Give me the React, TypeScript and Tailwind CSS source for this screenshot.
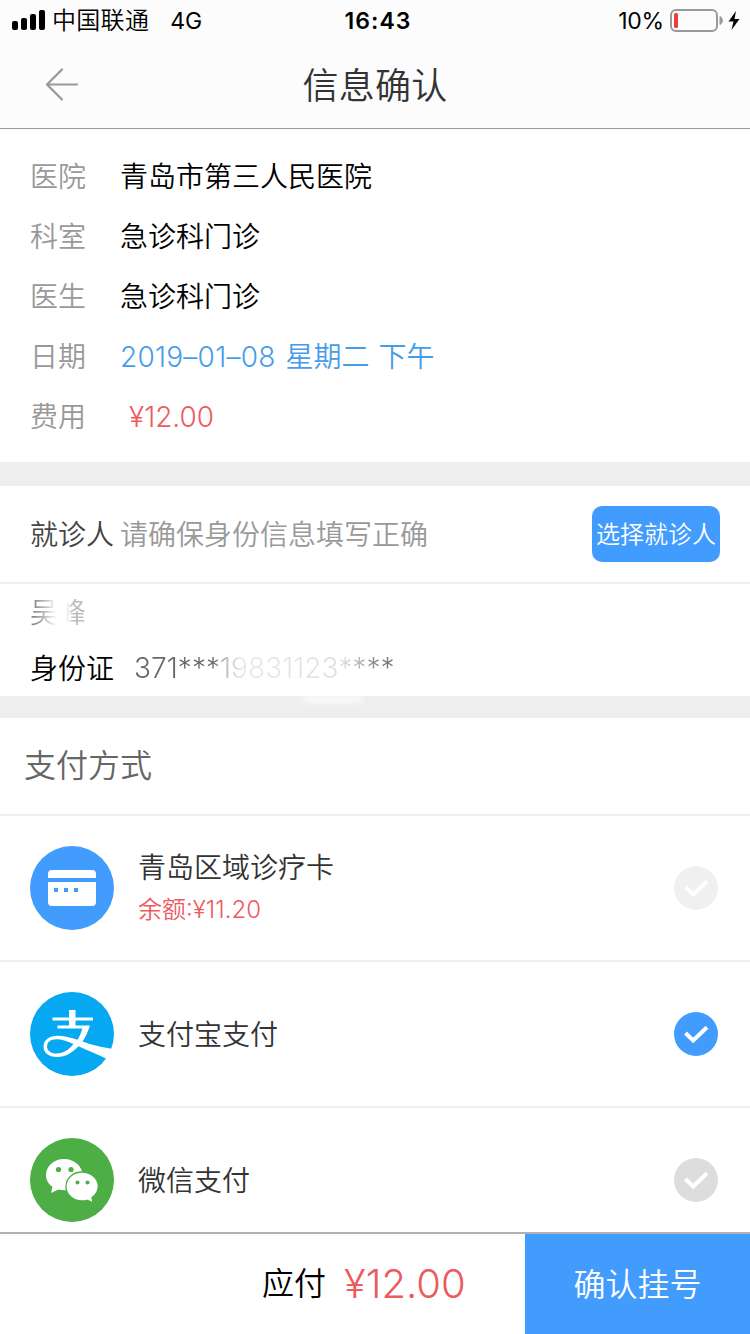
import type { ReactNode } from 'react';

function Row({ label, children }: { label: string; children: ReactNode }) {
  return (
    <div className="flex h-[60px] items-center">
      <span className="w-[90px] text-[#999999]">{label}</span>
      <span className="whitespace-pre">{children}</span>
    </div>
  );
}

function Check({ color }: { color: string }) {
  return (
    <svg className="mr-8 size-11" viewBox="0 0 44 44" aria-hidden="true">
      <circle cx="22" cy="22" r="22" fill={color} />
      <path d="M11.500 21L19.200 28.500L33 15.300" fill="none" stroke="#fff" strokeWidth="4" />
    </svg>
  );
}

function CardIcon() {
  return (
    <svg className="size-[84px]" viewBox="0 0 84 84" aria-hidden="true">
      <circle cx="42" cy="42" r="42" fill="#419cfd" />
      <path d="M18 32v-4a4 4 0 0 1 4-4h40a4 4 0 0 1 4 4v4z" fill="#fff" />
      <path d="M18 36h48v20a4 4 0 0 1-4 4H22a4 4 0 0 1-4-4z" fill="#fff" />
      <path d="M24 42h4v4h-4zM34 42h4v4h-4zM44 42h4v4h-4z" fill="#419cfd" />
    </svg>
  );
}

function AlipayIcon() {
  return (
    <svg className="size-[84px]" viewBox="0 0 84 84" aria-hidden="true">
      <circle cx="42" cy="42" r="42" fill="#06a8f2" />
      <path d="M39 18h6.500v7.500H63v3H45.500v5H60C58 40 55.500 45 52.500 49.500C60 52.500 72 55.500 83 57C81.500 60.500 79.500 64 77 67C67 62.500 57 58 48.500 54.300C42.500 60.500 36 65 27 65C18.500 65 13.500 60.500 13.500 54.500C13.500 48 19.500 43.800 27 43.800C34 43.800 41 45.500 47.500 47.800C49.800 44.300 51.300 40.500 52.300 36.500H27.500v-3H39v-5H22.500v-3H39z" fill="#fff" />
      <path d="M43.500 52C36.500 48.800 31.500 47.200 26.500 47.200C20.800 47.200 17 50 17 54.500C17 58.800 21 61.500 26.500 61.500C33.500 61.500 39 57.500 43.500 52z" fill="#06a8f2" />
    </svg>
  );
}

function WechatIcon() {
  return (
    <svg className="size-[84px]" viewBox="0 0 84 84" aria-hidden="true">
      <circle cx="42" cy="42" r="42" fill="#4dae46" />
      <path d="M34 21C24 21 16 28 16 37C16 42 18.500 46 22.500 48.800L21 55L28.500 51.500C30.300 52 32 52.200 34 52.200C44 52.200 52.500 45.500 52.500 37C52.500 28 44 21 34 21z" fill="#fff" />
      <path d="M52 34C43 34 36 40.400 36 48.500C36 56.700 43 63 52 63C53.800 63 55.500 62.700 57 62.300L63.200 64.800L62 59.500C66 56.700 68.300 53 68.300 48.500C68.300 40.400 61 34 52 34z" fill="#fff" stroke="#4dae46" strokeWidth="1.300" />
      <g fill="#4dae46">
        <circle cx="28.500" cy="31.500" r="2.600" />
        <circle cx="41" cy="31.500" r="2.600" />
        <circle cx="47.500" cy="44.500" r="2" />
        <circle cx="57.500" cy="44.500" r="2" />
      </g>
    </svg>
  );
}

function PayRow({ icon, check, children }: { icon: ReactNode; check: string; children: ReactNode }) {
  return (
    <div className="flex h-[146px] shrink-0 items-center border-b-2 border-[#eeeeee] pl-[30px]">
      {icon}
      <div className="ml-6 flex-1 pt-0.5 text-[#333333]">{children}</div>
      <Check color={check} />
    </div>
  );
}

export default function App() {
  return (
    <div className="flex h-[1334px] w-[750px] flex-col overflow-hidden bg-white font-['Inter','Noto_Sans_CJK_SC',sans-serif] text-[28px] leading-10 font-[350] text-black">
      <header className="flex h-[129px] shrink-0 flex-col border-b border-[#999999] bg-[#fcfcfc]">
        <div className="grid h-10 grid-cols-3 items-center text-[24px] leading-8 font-normal">
          <div className="flex items-center pl-3">
            <svg className="h-5 w-[34px]" viewBox="0 0 34 20" aria-hidden="true">
              <rect x="0" y="11" width="6" height="9" rx="2" />
              <rect x="9" y="8" width="6" height="12" rx="2" />
              <rect x="18" y="4" width="6" height="16" rx="2" />
              <rect x="27" y="0" width="6" height="20" rx="2" />
            </svg>
            <span className="ml-1.5 pt-0.5 font-[350] tracking-[0.3px]">中国联通</span>
            <span className="ml-[21px] pt-px text-[23px]">4G</span>
          </div>
          <div className="pt-px pl-1.5 text-center text-[23px] font-semibold tracking-[1.1px]">16:43</div>
          <div className="flex items-center justify-end pr-2.5">
            <span className="pt-px text-[23px] tracking-[-0.2px]">10%</span>
            <svg className="ml-1.5 h-6 w-[70px]" viewBox="0 0 70 24" aria-hidden="true">
              <rect x="1" y="2" width="46" height="21" rx="5" fill="none" stroke="#999" strokeWidth="2" />
              <rect x="4" y="5" width="4" height="15" rx="1.500" fill="#ea4038" />
              <path d="M50 8.500a4.500 4.500 0 0 1 0 8z" fill="#999" stroke="#999" />
              <path d="M66 3L58.500 13.500H63.500L61.500 22L69.500 11H64.500z" />
            </svg>
          </div>
        </div>
        <div className="flex h-[88px] items-center">
          <svg className="ml-[45px] h-9 w-[34px]" viewBox="0 0 34 36" fill="none" stroke="#999" strokeWidth="2.200" strokeLinecap="round" strokeLinejoin="round" aria-hidden="true">
            <path d="M32 18.500H2M17 3.500L2 18.500L17 33.500" />
          </svg>
          <h1 className="mr-[79px] flex-1 pt-[3px] text-center text-[36px] font-[350] tracking-[0.3px] text-[#333333]">信息确认</h1>
        </div>
      </header>

      <section className="h-[333px] shrink-0 pt-[18px] pl-[30px]">
        <Row label="医院">青岛市第三人民医院</Row>
        <Row label="科室">急诊科门诊</Row>
        <Row label="医生">急诊科门诊</Row>
        <Row label="日期">
          <span className="text-[#479cea]">
            <span className="tracking-[0.25px]">2019–01–08</span>
            <span className="ml-2.5">星期二</span>
            <span className="ml-[9px]">下午</span>
          </span>
        </Row>
        <Row label="费用"><span className="ml-[9px] text-[#ed5a60]">¥12.00</span></Row>
      </section>
      <div className="h-6 shrink-0 bg-[#eeeeee]" />

      <section className="flex h-[98px] shrink-0 items-center border-b-2 border-[#eeeeee] pr-[30px] pl-[30px]">
        <span className="pt-0.5 text-[#444444]">就诊人</span>
        <span className="ml-1.5 flex-1 pt-0.5 text-[#999999]">请确保身份信息填写正确</span>
        <button className="h-14 w-32 rounded-[10px] bg-[#419cfd] pt-px text-[24px] font-[350] text-white">选择就诊人</button>
      </section>
      <section className="h-28 shrink-0 pl-[30px]">
        <div className="flex h-14 items-center pt-0.5">
          <span className="bg-[linear-gradient(to_right,#777_0%,#ccc_32%,#fff_48%,#fff_62%,#bbb_78%,#bbb_100%)] bg-clip-text text-transparent">吴峰</span>
        </div>
        <div className="flex h-14 items-center">
          <span className="pt-0.5">身份证</span>
          <span className="ml-5 bg-[linear-gradient(to_right,#666_30%,#bbb_35%,#e8e8e8_41%,#e4e4e4_68%,#ddd_80%,#aaa_88%,#777_95%)] bg-clip-text tracking-[0.05px] text-transparent">371***19831123****</span>
        </div>
      </section>
      <div className="flex h-[22px] shrink-0 bg-[#eeeeee] pl-[302px]">
        <div className="h-[7px] w-[62px] rounded-b-full bg-white/80 blur-[3px]" />
      </div>

      <section className="flex min-h-0 flex-1 flex-col overflow-hidden">
        <h2 className="flex h-[98px] shrink-0 items-center border-b-2 border-[#eeeeee] pl-6 text-[32px] font-[350] text-[#666666]">支付方式</h2>
        <PayRow icon={<CardIcon />} check="#f0f0f0">
          <div>青岛区域诊疗卡</div>
          <div className="mt-0.5 text-[24px] text-[#ed5a60]">余额:¥11.20</div>
        </PayRow>
        <PayRow icon={<AlipayIcon />} check="#419cfd">支付宝支付</PayRow>
        <PayRow icon={<WechatIcon />} check="#dddddd">微信支付</PayRow>
      </section>

      <footer className="flex h-[102px] shrink-0 border-t-2 border-[#b2b2b2]">
        <div className="flex flex-1 items-center pl-[262px]">
          <span className="text-[32px]">应付</span>
          <span className="ml-[18px] text-[40px] text-[#ed5a60]">¥12.00</span>
        </div>
        <button className="w-[225px] bg-[#419cfd] pt-px text-[32px] font-[350] text-white">确认挂号</button>
      </footer>
    </div>
  );
}
